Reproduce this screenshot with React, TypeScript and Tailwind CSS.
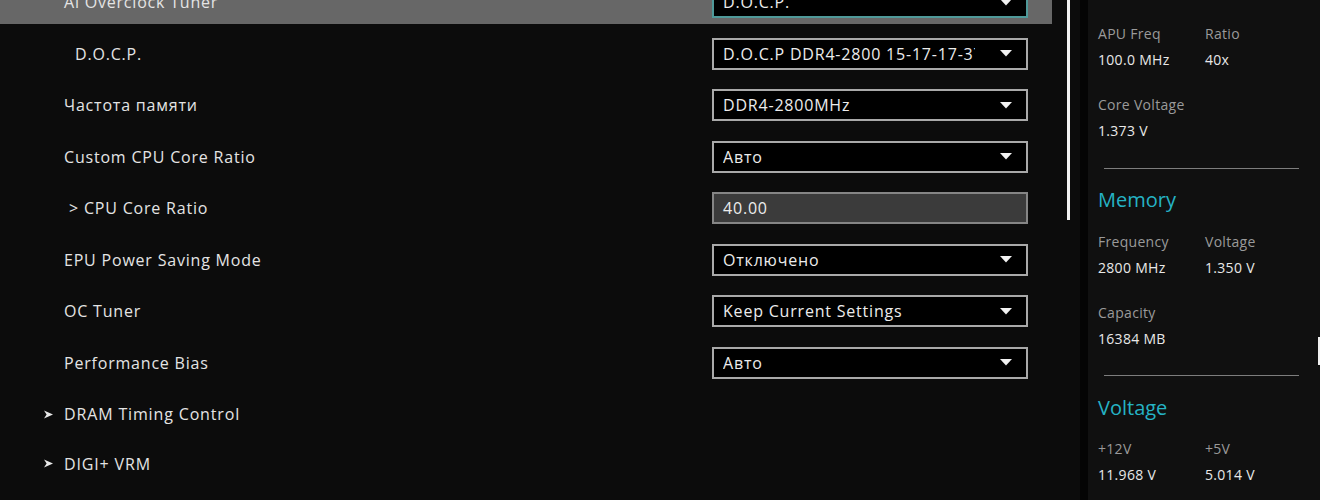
import React from 'react';

// ============================================
// BIOS Ai Tweaker panel
// ============================================

type Row =
    | { kind: 'select'; label: string; value: string; indent?: string; active?: boolean }
    | { kind: 'input'; label: string; value: string; indent?: string }
    | { kind: 'link'; label: string; tall?: boolean };

const ROWS: Row[] = [
    { kind: 'select', label: 'Ai Overclock Tuner', value: 'D.O.C.P.', active: true },
    { kind: 'select', label: 'D.O.C.P.', value: 'D.O.C.P DDR4-2800 15-17-17-37', indent: 'pl-[11px]' },
    { kind: 'select', label: 'Частота памяти', value: 'DDR4-2800MHz' },
    { kind: 'select', label: 'Custom CPU Core Ratio', value: 'Авто' },
    { kind: 'input', label: '> CPU Core Ratio', value: '40.00', indent: 'pl-[5px]' },
    { kind: 'select', label: 'EPU Power Saving Mode', value: 'Отключено' },
    { kind: 'select', label: 'OC Tuner', value: 'Keep Current Settings' },
    { kind: 'select', label: 'Performance Bias', value: 'Авто' },
    { kind: 'link', label: 'DRAM Timing Control', tall: true },
    { kind: 'link', label: 'DIGI+ VRM' },
];

const Caret = () => (
    <svg width="12" height="7" viewBox="0 0 12 7" className="shrink-0">
        <polygon points="0,0 12,0 6,6.5" fill="#f2f2f2" />
    </svg>
);

const Arrow = () => (
    <svg width="9" height="9" viewBox="0 0 9 9" className="shrink-0">
        <polygon points="0,0.5 9,4.5 0,8.5 2.6,4.5" fill="#e8e8e8" />
    </svg>
);

const SettingRow: React.FC<{ row: Row }> = ({ row }) => {
    if (row.kind === 'link') {
        return (
            <div className={`flex items-center ${row.tall ? 'h-[44px]' : 'h-[40px]'}`}>
                <div className="w-[64px] flex justify-end pr-[11px]">
                    <Arrow />
                </div>
                <span className="text-[16px] font-medium tracking-[0.85px] text-[#e4e4e4]">{row.label}</span>
            </div>
        );
    }

    const active = row.kind === 'select' && row.active;

    return (
        <div className={`flex items-center h-[44px] pl-[64px] pr-[24px] ${active ? 'bg-[#676767]' : ''}`}>
            <span className={`flex-1 text-[16px] font-medium tracking-[0.8px] text-[#e4e4e4] ${row.indent ?? ''}`}>
                {row.label}
            </span>
            {row.kind === 'select' ? (
                <div
                    className={`w-[316px] h-[32px] flex items-center justify-between pl-[9px] pr-[14px] bg-black border-2 ${
                        active ? 'border-[#4f9999]' : 'border-[#a9a9a9]'
                    }`}
                >
                    <span className="text-[16px] font-medium tracking-[0.8px] text-[#ececec] whitespace-nowrap overflow-hidden w-[252px]">
                        {row.value}
                    </span>
                    <Caret />
                </div>
            ) : (
                <div className="w-[316px] h-[32px] flex items-center pl-[9px] bg-[#3b3b3b] border-2 border-[#858585]">
                    <span className="text-[16px] font-medium tracking-[0.8px] text-[#ececec]">{row.value}</span>
                </div>
            )}
        </div>
    );
};

const Stat: React.FC<{ label: string; value: string }> = ({ label, value }) => (
    <div className="flex flex-col tracking-[0.3px]">
        <span className="h-[26px] leading-[26px] text-[14px] text-[#9a9a9a]">{label}</span>
        <span className="h-[26px] leading-[26px] text-[14px] font-medium text-[#e8e8e8]">{value}</span>
    </div>
);

const Divider = ({ className = '' }: { className?: string }) => (
    <div className={`ml-[6px] w-[195px] h-px bg-[#7d7d7d] ${className}`} />
);

const Header = ({ title, className = '' }: { title: string; className?: string }) => (
    <div className={`h-[26px] leading-[26px] text-[20px] text-[#25b3c5] ${className}`}>{title}</div>
);

export default function App() {
    return (
        <div
            className="w-[1320px] h-[500px] overflow-hidden flex bg-[#0c0c0c]"
            style={{ fontFamily: '"Open Sans", "Noto Sans", sans-serif' }}
        >
            {/* Settings list */}
            <div className="w-[1052px] flex flex-col gap-[7.5px] mt-[-20px]">
                {ROWS.map((row) => (
                    <SettingRow key={row.label} row={row} />
                ))}
            </div>

            {/* Scrollbar */}
            <div className="w-[28px] pl-[15px]">
                <div className="w-[3px] h-[220px] bg-[#f2f2f2]" />
            </div>

            <div className="w-[8px] bg-[#040404]" />

            {/* Hardware monitor */}
            <div className="relative flex-1 bg-[#101010] pl-[10px] pt-[21px] flex flex-col">
                <div className="grid grid-cols-[107px_1fr]">
                    <Stat label="APU Freq" value="100.0 MHz" />
                    <Stat label="Ratio" value="40x" />
                </div>
                <div className="mt-[19px]">
                    <Stat label="Core Voltage" value="1.373 V" />
                </div>
                <Divider className="mt-[24px]" />
                <Header title="Memory" className="mt-[18px]" />
                <div className="grid grid-cols-[107px_1fr] mt-[16px]">
                    <Stat label="Frequency" value="2800 MHz" />
                    <Stat label="Voltage" value="1.350 V" />
                </div>
                <div className="mt-[19px]">
                    <Stat label="Capacity" value="16384 MB" />
                </div>
                <Divider className="mt-[23px]" />
                <Header title="Voltage" className="mt-[19px]" />
                <div className="grid grid-cols-[107px_1fr] mt-[15px]">
                    <Stat label="+12V" value="11.968 V" />
                    <Stat label="+5V" value="5.014 V" />
                </div>

                <div className="absolute right-0 top-[337px] w-[2px] h-[28px] bg-[#f0f0f0]" />
            </div>
        </div>
    );
}
